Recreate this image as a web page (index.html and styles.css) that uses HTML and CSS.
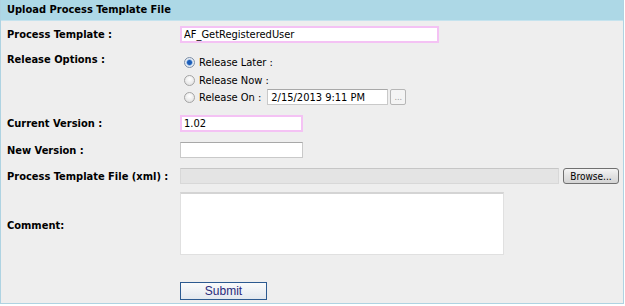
FILE: index.html
```html
<!DOCTYPE html>
<html lang="en">
<head>
    <meta charset="UTF-8">
    <title>Upload Process Template File</title>
    <link rel="stylesheet" href="styles.css">
</head>
<body>
    <div class="panel">
        <div class="panel-head">Upload Process Template File</div>
        <div class="panel-body">
            <div class="row row-first">
                <label class="lbl">Process Template :</label>
                <input class="txt txt-long req" type="text" value="AF_GetRegisteredUser">
            </div>
            <div class="row row-release">
                <label class="lbl lbl-top">Release Options :</label>
                <div class="options">
                    <label class="opt"><input type="radio" name="rel" checked><span>Release Later :</span></label>
                    <label class="opt"><input type="radio" name="rel"><span>Release Now :</span></label>
                    <label class="opt opt-date"><input type="radio" name="rel"><span>Release On :</span><input class="txt txt-date" type="text" value="2/15/2013 9:11 PM"><button class="dots" type="button">...</button></label>
                </div>
            </div>
            <div class="row row-current">
                <label class="lbl">Current Version :</label>
                <input class="txt txt-short req" type="text" value="1.02">
            </div>
            <div class="row row-new">
                <label class="lbl">New Version :</label>
                <input class="txt txt-short" type="text" value="">
            </div>
            <div class="row row-file">
                <label class="lbl">Process Template File (xml) :</label>
                <div class="file-bar"></div>
                <button class="browse" type="button">Browse...</button>
            </div>
            <div class="row row-comment">
                <label class="lbl lbl-comment">Comment:</label>
                <textarea class="comment"></textarea>
            </div>
            <div class="row-submit">
                <button class="submit" type="button">Submit</button>
            </div>
        </div>
    </div>
</body>
</html>
```
FILE: styles.css
```css
body { margin: 0; font-family: Tahoma, "DejaVu Sans Condensed", "DejaVu Sans", sans-serif; font-size: 11px; color: #000; background: #fff; }
.panel { width: 622px; height: 303px; border: 1px solid #aed3e2; border-top: none; background: #eeeeee; }
.panel-head { height: 20px; line-height: 20px; padding-left: 6px; background: #add8e6; border-bottom: 1px solid #c5e3ee; font-weight: bold; }
.panel-body { padding-left: 6px; }
.row { display: flex; align-items: center; height: 26px; }
.row-release { align-items: flex-start; height: 58px; }
.row-current { margin-top: 5px; }
.row-new { height: 28px; }
.row-file { height: 24px; }
.lbl { width: 173px; flex: none; font-weight: bold; white-space: nowrap; }
.lbl-top { margin-top: 6px; }
.lbl-comment { padding-top: 5px; }
.txt { box-sizing: border-box; height: 16px; padding: 0 3px; border: 1px solid #c9c9c9; border-top-color: #a8a8a8; background: #fff; font-family: inherit; font-size: 11px; line-height: 14px; outline: none; }
.req { height: 17px; border: 2px solid #f4c2f4; padding: 0 2px; }
.txt-long { width: 259px; }
.txt-short { width: 123px; }
.txt-date { width: 121px; margin-left: 6px; }
.options { display: flex; flex-direction: column; padding-top: 6px; }
.opt { display: flex; align-items: center; height: 18px; white-space: nowrap; }
.opt-date { height: 16px; }
.opt input[type=radio] { appearance: none; width: 11px; height: 11px; margin: 0 4px 0 4px; border: 1px solid #a4a4a4; border-radius: 50%; background: radial-gradient(circle at 50% 35%, #ffffff, #dcdcdc); box-sizing: border-box; }
.opt input[type=radio]:checked { background: radial-gradient(circle, #1c5db8 0 2px, #5c93d6 2.5px, #e8eef6 3.5px, #dcdcdc); border-color: #7d8fa8; }
.dots { box-sizing: border-box; width: 16px; height: 16px; margin-left: 2px; padding: 0; border: 1px solid #b6b6b6; border-radius: 2px; background: #f4f4f4; color: #9a9a9a; font-size: 9px; line-height: 10px; font-family: inherit; }
.file-bar { box-sizing: border-box; width: 379px; height: 16px; border: 1px solid #d8d8d8; border-top-color: #c6c6c6; background: #e4e4e4; }
.browse { box-sizing: border-box; width: 56px; height: 16px; margin-left: 4px; padding: 0; border: 1px solid #707070; border-radius: 3px; background: linear-gradient(#f4f4f4, #e2e2e2 50%, #d4d4d4); font-family: "DejaVu Sans Condensed", sans-serif; font-size: 10px; line-height: 13px; }
.row-comment { height: 70px; }
.comment { box-sizing: border-box; width: 324px; height: 63px; margin: 0; border: 1px solid #e0e0e0; border-top: 2px solid #d4d4d4; background: #fff; resize: none; outline: none; }
.row-submit { padding: 24px 0 0 173px; }
.submit { box-sizing: border-box; width: 87px; height: 18px; padding: 0; border: 1px solid #2c5a90; background: linear-gradient(#fbfbfb, #e3e8ee); color: #2a2a7a; font-family: Arial, "Liberation Sans", sans-serif; font-size: 12px; line-height: 14px; }
```
